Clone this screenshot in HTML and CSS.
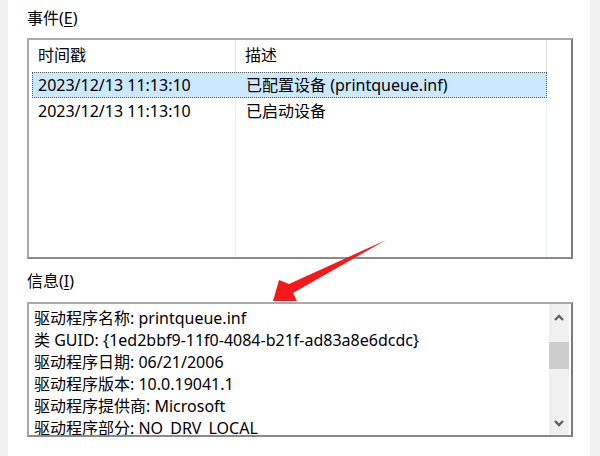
FILE: index.html
```html
<!DOCTYPE html>
<html lang="zh-CN">
<head>
  <meta charset="UTF-8">
  <title>设备属性 - 事件</title>
  <link rel="stylesheet" href="styles.css">
</head>
<body>
  <div class="dialog">
    <div class="group-label">事件(<u>E</u>)</div>
    <div class="listview">
      <div class="lv-header">
        <div class="col col-time">时间戳</div>
        <div class="col col-desc">描述</div>
      </div>
      <div class="lv-body">
        <div class="lv-row selected">
          <div class="col col-time">2023/12/13 11:13:10</div>
          <div class="col col-desc">已配置设备 (printqueue.inf)</div>
        </div>
        <div class="lv-row">
          <div class="col col-time">2023/12/13 11:13:10</div>
          <div class="col col-desc">已启动设备</div>
        </div>
      </div>
    </div>

    <div class="group-label info-label">信息(<u>I</u>)</div>
    <div class="infobox">
      <div class="info-text">
        <div>驱动程序名称: printqueue.inf</div>
        <div>类 GUID: {1ed2bbf9-11f0-4084-b21f-ad83a8e6dcdc}</div>
        <div>驱动程序日期: 06/21/2006</div>
        <div>驱动程序版本: 10.0.19041.1</div>
        <div>驱动程序提供商: Microsoft</div>
        <div>驱动程序部分: NO_DRV_LOCAL</div>
      </div>
      <div class="scrollbar">
        <div class="sb-btn sb-up">
          <svg width="10" height="7" viewBox="0 0 10 7"><polyline points="1,6 5,2 9,6" fill="none" stroke="#606060" stroke-width="2.4"/></svg>
        </div>
        <div class="sb-thumb"></div>
        <div class="sb-track"></div>
        <div class="sb-btn sb-down">
          <svg width="10" height="7" viewBox="0 0 10 7"><polyline points="1,1 5,5 9,1" fill="none" stroke="#606060" stroke-width="2.4"/></svg>
        </div>
      </div>
    </div>
  </div>

  <!-- annotation arrow drawn over the dialog -->
  <svg class="annotation" width="600" height="456" viewBox="0 0 600 456">
    <polygon points="386,240 289,284 279,280 273,301 297,301 293,293" fill="#f51a1a"/>
  </svg>
</body>
</html>
```

FILE: styles.css
```css
* {
  box-sizing: border-box;
}
body {
  margin: 0;
  width: 600px;
  height: 456px;
  background: #f0f0f0;
  color: #000;
  font-family: "Noto Sans", "Noto Sans CJK SC", sans-serif;
  font-size: 16px;
  position: relative;
  overflow: hidden;
}
.dialog {
  margin-left: 8px;
  width: 582px;
  height: 456px;
  background: #fff;
  padding: 7px 17px 0 19px;
  display: flex;
  flex-direction: column;
}
.group-label {
  height: 22px;
  line-height: 22px;
}
.group-label u {
  text-underline-offset: 2px;
}
.info-label {
  margin-top: 11px;
}
.listview {
  margin-top: 9px;
  height: 221px;
  border: 2px solid;
  border-color: #a9a9a9 #7a7a7a #8a8a8a #a9a9a9;
  display: flex;
  flex-direction: column;
}
.lv-header {
  height: 32px;
  display: flex;
  padding-left: 3px;
  line-height: 30px;
}
.lv-header .col {
  border-right: 1px solid #e3e3e3;
}
.lv-body {
  flex: 1;
  padding-left: 3px;
  background:
    linear-gradient(#e6eef7, #e6eef7) 206px 0 / 1px 100% no-repeat,
    linear-gradient(#e6eef7, #e6eef7) 517px 0 / 1px 100% no-repeat;
}
.lv-row {
  display: flex;
  height: 26px;
  line-height: 24px;
  width: 515px;
  border: 1px solid transparent;
}
.lv-row.selected {
  background: #cce8ff;
  border: 1px dotted #5a5a5a;
}
.col-time {
  width: 204px;
  padding-left: 6px;
}
.lv-row .col-time {
  padding-left: 5px;
}
.col-desc {
  width: 311px;
  padding-left: 9px;
}
.lv-row .col-desc {
  width: 309px;
}
.infobox {
  margin-top: 10px;
  height: 135px;
  border: 2px solid;
  border-color: #a9a9a9 #7a7a7a #8a8a8a #a9a9a9;
  display: flex;
  overflow: hidden;
}
.info-text {
  flex: 1;
  padding: 3px 5px 0;
  line-height: 22px;
  white-space: nowrap;
  overflow: hidden;
}
.scrollbar {
  width: 20px;
  margin-right: 2px;
  background: #f0f0f0;
  display: flex;
  flex-direction: column;
}
.sb-btn {
  display: flex;
  align-items: center;
  justify-content: center;
}
.sb-up {
  height: 26px;
}
.sb-down {
  height: 24px;
}
.sb-thumb {
  margin-top: 12px;
  height: 27px;
  background: #cdcdcd;
}
.sb-track {
  flex: 1;
}
.annotation {
  position: absolute;
  top: 0;
  left: 0;
  pointer-events: none;
}
```
